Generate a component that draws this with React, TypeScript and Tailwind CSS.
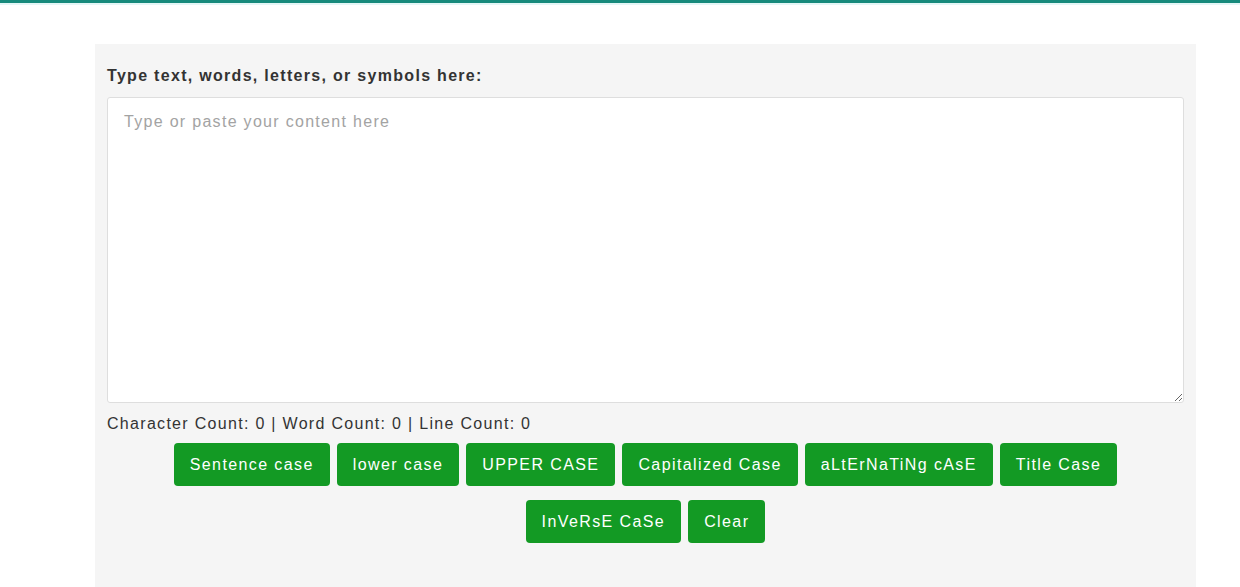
import React from "react";

const buttons = [
  "Sentence case",
  "lower case",
  "UPPER CASE",
  "Capitalized Case",
  "aLtErNaTiNg cAsE",
  "Title Case",
  "InVeRsE CaSe",
  "Clear",
];

export default function App() {
  return (
    <div
      className="w-[1240px] h-[587px] bg-white overflow-hidden"
      style={{ fontFamily: '"Liberation Sans", Arial, sans-serif' }}
    >
      <div className="h-[3px] bg-[#178a7c]" />
      <div className="h-[2px] bg-[#e4f6f6]" />
      <div className="pt-[39px]">
        <div className="w-[1101px] ml-[95px] bg-[#f5f5f5] px-[12px] pt-[22px] pb-[80px]">
          <label className="block text-[16px] font-bold text-[#333] leading-[20px] tracking-[1.3px] mb-[11px]">
            Type text, words, letters, or symbols here:
          </label>
          <textarea
            className="block w-full h-[306px] bg-white border border-[#dedede] rounded-[3px] px-[16px] py-[12px] text-[16px] tracking-[1.3px] text-[#333] placeholder:text-[#a3a3a3] outline-none"
            placeholder="Type or paste your content here"
          />
          <div className="mt-[11px] text-[16px] text-[#333] leading-[20px] tracking-[1.3px]">
            Character Count: 0 | Word Count: 0 | Line Count: 0
          </div>
          <div className="mt-[9px] flex flex-wrap justify-center gap-x-[7px] gap-y-[14px]">
            {buttons.map((b) => (
              <button
                key={b}
                className="h-[43px] pl-[16px] pr-[16px] bg-[#139a24] text-white text-[16px] tracking-[1.4px] rounded-[4px] leading-[19px]"
              >
                {b}
              </button>
            ))}
          </div>
        </div>
      </div>
    </div>
  );
}
